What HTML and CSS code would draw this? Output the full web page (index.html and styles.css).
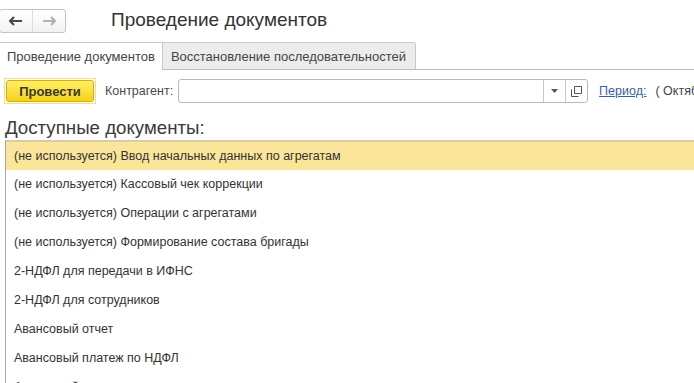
FILE: index.html
```html
<!DOCTYPE html>
<html>
<head>
  <meta charset="UTF-8">
  <title>Проведение документов</title>
  <link rel="stylesheet" href="styles.css">
</head>
<body>
  <div class="topbar">
    <div class="nav">
      <span class="nav-btn">
        <svg width="14" height="10" viewBox="0 0 14 10"><path d="M1 5h12M5 1L1 5l4 4" stroke="#4a4a4a" stroke-width="2.2" fill="none"/></svg>
      </span>
      <span class="nav-btn">
        <svg width="14" height="10" viewBox="0 0 14 10"><path d="M1 5h12M9 1l4 4-4 4" stroke="#b0b0b0" stroke-width="2.2" fill="none"/></svg>
      </span>
    </div>
    <div class="title">Проведение документов</div>
  </div>

  <div class="tabs">
    <div class="tab active">Проведение документов</div>
    <div class="tab">Восстановление последовательностей</div>
  </div>

  <div class="toolbar">
    <div class="btn-frame"><button class="btn-main">Провести</button></div>
    <span class="label">Контрагент:</span>
    <div class="field">
      <div class="field-input"></div>
      <span class="field-btn">
        <svg width="7" height="4" viewBox="0 0 7 4"><path d="M0 0h7L3.5 4z" fill="#555"/></svg>
      </span>
      <span class="field-btn">
        <svg width="11" height="11" viewBox="0 0 11 11"><path d="M3.5 0.5h7v7h-7z M0.5 3.5v7h7" stroke="#555" fill="none"/></svg>
      </span>
    </div>
    <a class="link" href="#">Период:</a>
    <span class="period">( Октябрь</span>
  </div>

  <div class="heading">Доступные документы:</div>

  <div class="list">
    <div class="row selected">(не используется) Ввод начальных данных по агрегатам</div>
    <div class="row">(не используется) Кассовый чек коррекции</div>
    <div class="row">(не используется) Операции с агрегатами</div>
    <div class="row">(не используется) Формирование состава бригады</div>
    <div class="row">2-НДФЛ для передачи в ИФНС</div>
    <div class="row">2-НДФЛ для сотрудников</div>
    <div class="row">Авансовый отчет</div>
    <div class="row">Авансовый платеж по НДФЛ</div>
    <div class="row">Авансовый платеж по страховым взносам</div>
  </div>
</body>
</html>
```

FILE: styles.css
```css
body {
  margin: 0;
  font-family: "Liberation Sans", Arial, sans-serif;
  color: #333;
  background: #fff;
  overflow: hidden;
}
.topbar {
  display: flex;
  align-items: center;
  height: 40px;
}
.nav {
  display: flex;
  flex-shrink: 0;
  margin-left: -1px;
  margin-top: 1px;
  height: 22px;
  border: 1px solid #c4c4c4;
  border-radius: 3px;
  background: linear-gradient(#ffffff, #f2f2f2);
}
.nav-btn {
  width: 32px;
  display: flex;
  align-items: center;
  justify-content: center;
}
.nav-btn + .nav-btn {
  border-left: 1px solid #dcdcdc;
}
.title {
  margin-left: 45px;
  font-size: 19px;
  color: #333;
}
.tabs {
  display: flex;
  margin-top: 2px;
  height: 27px;
  border-bottom: 1px solid #bdbdbd;
}
.tab {
  display: flex;
  align-items: center;
  flex-shrink: 0;
  padding: 0 9px 0 8px;
  font-size: 13px;
  color: #444;
  border: 1px solid #c8c8c8;
  border-bottom: none;
  border-radius: 0 3px 0 0;
  background: #ececec;
  margin-left: -1px;
}
.tab.active {
  background: #fff;
  margin-bottom: -1px;
  border-left: none;
  border-radius: 0;
  margin-left: 0;
  padding-left: 7px;
  padding-right: 7px;
}
.toolbar {
  display: flex;
  align-items: center;
  padding: 8px 0 0 4px;
  height: 26px;
  white-space: nowrap;
}
.toolbar > * {
  flex-shrink: 0;
}
.btn-frame {
  border: 1px solid #f3e27a;
  padding: 1px;
}
.btn-main {
  display: block;
  width: 88px;
  height: 22px;
  border: 1px solid #d2ae10;
  border-radius: 3px;
  background: linear-gradient(#fff06a, #f7d21a);
  font-family: "Liberation Sans", Arial, sans-serif;
  font-size: 13px;
  font-weight: bold;
  color: #3a3a2a;
  padding: 0;
}
.label {
  margin-left: 9px;
  font-size: 12.5px;
  color: #4a4a4a;
}
.field {
  display: flex;
  margin-left: 5px;
  width: 408px;
  height: 22px;
  border: 1px solid #b8b8b8;
  border-radius: 3px;
}
.field-input {
  flex: 1;
}
.field-btn {
  width: 21px;
  display: flex;
  align-items: center;
  justify-content: center;
  border-left: 1px solid #c8c8c8;
}
.link {
  margin-left: 11px;
  font-size: 12.5px;
  color: #3a5f9f;
}
.period {
  margin-left: 9px;
  font-size: 12.5px;
  color: #444;
}
.heading {
  margin: 13px 0 0 5px;
  font-size: 18.7px;
  color: #3a3a3a;
  height: 23px;
}
.list {
  margin-left: 5px;
  border-left: 1px solid #a8a8a8;
  border-top: 1px solid #c9c9c9;
}
.row {
  height: 29px;
  line-height: 29px;
  padding-left: 8px;
  font-size: 12.5px;
  color: #333;
  white-space: nowrap;
}
.row.selected {
  background: #fbe59a;
  border-top: 1px solid #e8cf85;
  height: 28px;
  line-height: 28px;
}
```
